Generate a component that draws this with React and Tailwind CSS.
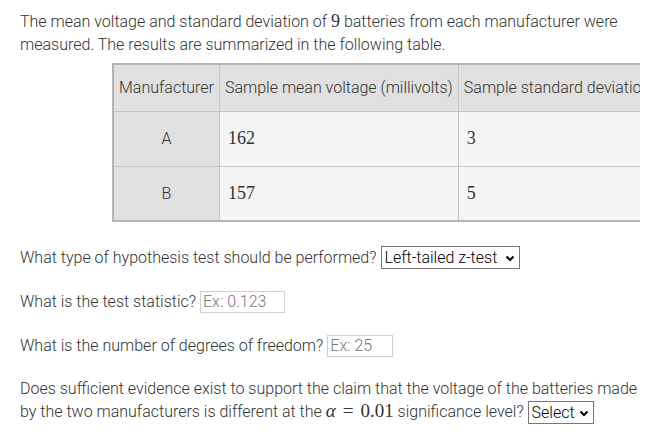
export default function App() {
  const rows = [
    { m: "A", mean: "162", sd: "3" },
    { m: "B", mean: "157", sd: "5" },
  ]

  return (
    <div className="w-[662px] h-[439px] bg-white text-[#333] font-['Roboto',sans-serif] font-light text-[16px] leading-[23px]">
      <div className="pl-5 pr-[22px] pt-2.5">
        <p>
          The mean voltage and standard deviation of{" "}
          <span className="font-['Liberation_Serif',serif] font-normal text-[18px] leading-none">9</span> batteries from each manufacturer were
          measured. The results are summarized in the following table.
        </p>

        {/* Table, clipped at the right edge */}
        <div className="mt-[7px] overflow-hidden">
          <table className="ml-[92px] border-collapse border-2 border-[#b4b4b4] whitespace-nowrap">
            <thead>
              <tr className="h-[47px] bg-[#e0e0e0]">
                <th className="font-light px-[5px] border border-[#c4c4c4] text-left">Manufacturer</th>
                <th className="font-light px-[5px] border border-[#c4c4c4] text-left">Sample mean voltage (millivolts)</th>
                <th className="font-light px-[5px] border border-[#c4c4c4] text-left">Sample standard deviation (millivolts)</th>
              </tr>
            </thead>
            <tbody>
              {rows.map((r) => (
                <tr key={r.m} className="h-[55px]">
                  <td className="bg-[#e0e0e0] border border-[#c4c4c4] text-center">{r.m}</td>
                  <td className="bg-[#f5f5f5] border border-[#c4c4c4] px-2 font-['Liberation_Serif',serif] font-normal text-[18px]">{r.mean}</td>
                  <td className="bg-[#f5f5f5] border border-[#c4c4c4] px-2 font-['Liberation_Serif',serif] font-normal text-[18px]">{r.sd}</td>
                </tr>
              ))}
            </tbody>
          </table>
        </div>

        <div className="mt-[24px] flex items-center gap-1">
          <span>What type of hypothesis test should be performed?</span>
          <div className="h-[23px] border border-[#767676] flex items-center pl-[3px] pr-[4px] gap-2 text-black">
            <span>Left-tailed z-test</span>
            <svg width="10" height="10" viewBox="0 0 10 10"><path d="M1.5 3.5 L5 7 L8.5 3.5" stroke="#000" strokeWidth="2" fill="none" /></svg>
          </div>
        </div>

        <div className="mt-[21px] flex items-center gap-1">
          <span>What is the test statistic?</span>
          <div className="w-[85px] h-[22px] border border-[#c8d0d8] flex items-center px-[2px] text-[#777]">Ex: 0.123</div>
        </div>

        <div className="mt-[21px] flex items-center gap-1">
          <span>What is the number of degrees of freedom?</span>
          <div className="w-[66px] h-[22px] border border-[#c8d0d8] flex items-center px-[2px] text-[#777]">Ex: 25</div>
        </div>

        <p className="mt-[20px]">
          Does sufficient evidence exist to support the claim that the voltage of the batteries made
          by the two manufacturers is different at the{" "}
          <span className="font-['Liberation_Serif',serif] font-normal text-[19px] leading-none whitespace-nowrap">
            <span className="italic">α</span>
            <span className="mx-[7px]">=</span>
            0.01
          </span>{" "}
          significance level?{" "}
          <span className="inline-flex items-center h-[23px] border border-[#767676] pl-[3px] pr-[4px] gap-1 text-black align-middle leading-none">
            Select
            <svg width="10" height="10" viewBox="0 0 10 10"><path d="M1.5 3.5 L5 7 L8.5 3.5" stroke="#000" strokeWidth="2" fill="none" /></svg>
          </span>
        </p>
      </div>
    </div>
  )
}
